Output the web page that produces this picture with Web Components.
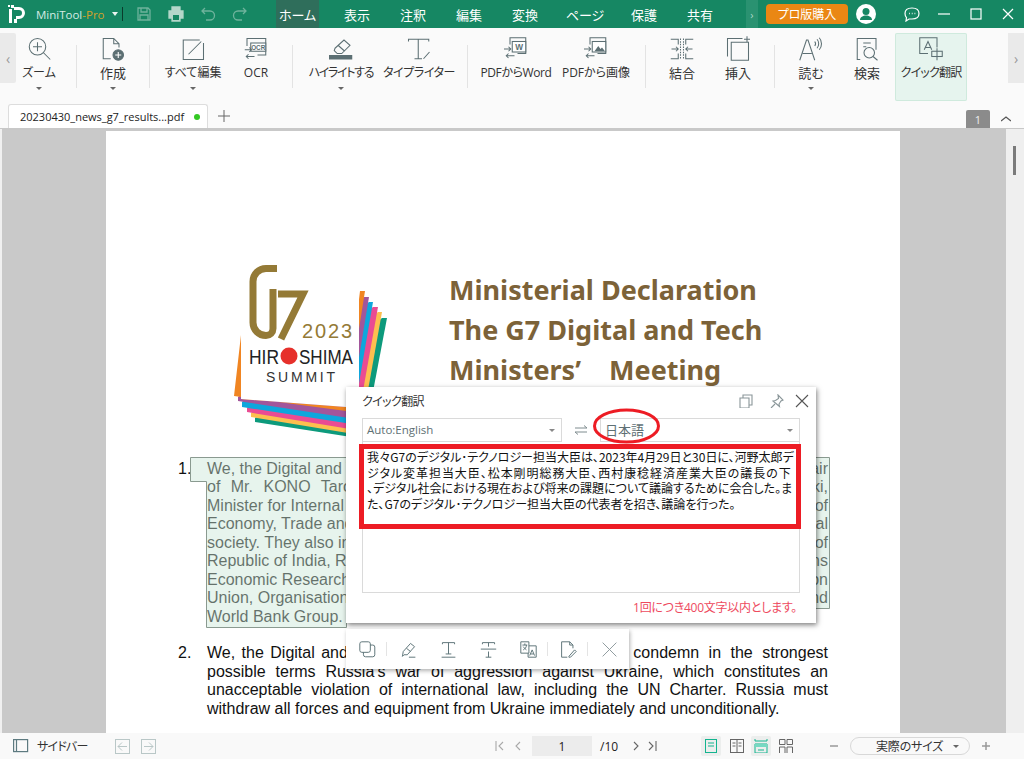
<!DOCTYPE html>
<html lang="ja">
<head>
<meta charset="utf-8">
<title>MiniTool PDF</title>
<style>
  html, body { margin: 0; height: 100%; overflow: hidden; }
  body { font-family: "Noto Sans CJK JP", "Liberation Sans", sans-serif; }
</style>
</head>
<body>
<pdf-app></pdf-app>

<script>
const FONT = `"Open Sans", "Noto Sans CJK JP", sans-serif`;

// line icons for the ribbon, all on a 32x32 box
const RIBBON_ICONS = {
  zoom: `<circle cx="14" cy="13" r="11"/><path d="M14 7v12M8 13h12M22 21l9 9"/>`,
  create: `<path d="M13 29H3V2h14l7 7v5M17 2v7h7"/><circle cx="23" cy="24" r="7" fill="#5c6f73"/><path d="M19 24h8M23 20v8" stroke="#fff"/>`,
  edit: `<path d="M30 8v22H3V4h22M10 23 27 6"/>`,
  ocr: `<path d="M4 12V2h25v22H18"/><rect x="9" y="8" width="20" height="11" fill="#fff"/><text x="19" y="17" font-size="8.500" font-family="Liberation Sans" font-weight="700" text-anchor="middle" stroke="none" fill="#5c6f73">OCR</text><path d="M1 17h9M7 14l3 3-3 3M14 26H3M6 23l-3 3 3 3"/>`,
  highlight: `<path d="M8 15 20 4l8 7-11 11h-6l-4-4zM12 11l9 8"/><rect x="0" y="24" width="31" height="6" fill="#5c6f73" stroke="none"/>`,
  type: `<path d="M2 6V3h27v3M15 3v26M10 29h10M22 29l8-9"/>`,
  toword: `<path d="M8 10V1h21v21H18"/><rect x="11" y="6" width="18" height="14" fill="#fff" stroke="#5c6f73"/><text x="20" y="17.500" font-size="11" font-family="Liberation Sans" font-weight="700" text-anchor="middle" stroke="none" fill="#5c6f73">W</text><path d="M0 16h9M6 13l3 3-3 3M14 25H3M6 22l-3 3 3 3"/>`,
  toimage: `<path d="M8 10V1h21v21H18"/><rect x="11" y="6" width="18" height="14" fill="#fff" stroke="#5c6f73"/><path d="m14 19 5-7 3 4 2-2 4 5z" fill="#5c6f73" stroke="none"/><path d="M0 16h9M6 13l3 3-3 3M14 25H3M6 22l-3 3 3 3"/>`,
  merge: `<path d="M1 3h10v7M11 22v7H1M31 3H21v7M21 22v7h10"/><path d="M14 2v28M18 2v28" stroke-dasharray="2 1.500"/><path d="M2 16h9M8 13l3 3-3 3M30 16h-9M24 13l-3 3 3 3"/>`,
  insert: `<path d="M7 7v24h23V7zM2 26V2h20M24 3h8M28 -1v8"/>`,
  read: `<path d="m1 31 9-27h2l9 27M5 22h12M24 3c3 3 3 9 0 12M27 1c4 4 4 12 0 16M21 6c1.500 2 1.500 4 0 6"/>`,
  search: `<path d="M7 30H3V2h25v15M11 8h10M11 13h4"/><circle cx="19" cy="21" r="7"/><path d="m24 26 6 5"/>`,
  translate: `<path d="M24 14V1H1v21h11M7 17l5-11 5 11M8.500 14h7"/><rect x="17" y="19" width="14" height="7"/><path d="M24 15v16"/>`
};

// small grey outline icons used by the selection bar
const SMALL_ICONS = {
  copy: `<rect x="1" y="1" width="13" height="13" rx="2.500"/><path d="M14 5h3a2.500 2.500 0 0 1 2.500 2.500v9.500a2.500 2.500 0 0 1-2.500 2.500H8a2.500 2.500 0 0 1-2.500-2.500V14"/>`,
  marker: `<path d="m4 13 9-10 5 4-9 10H5l-2 2zM8 9l5 4M11 20h8"/>`,
  under: `<path d="M3 4V2h15v2M10.500 2v14M7 16h7M2 20h17"/>`,
  strike: `<path d="M3 4V2h15v2M10.500 2v5M10.500 13v7M7 20h7M1 10h19"/>`,
  trans: `<path d="M1 1h10v14H1zM11 6h9v14H10v-5"/><path d="M3 5h6M6 3v2M8 5c0 3-2 5-4 6M4 7c1 2 3 3 4 4M12 18l3-7 3 7M13 16h4"/>`,
  note: `<path d="M9 20H2V1h10l4 4v4M12 1v4h4M11 19l7-8 2 2-7 7h-2z"/>`,
  close: `<path d="M2 2l17 17M19 2 2 19"/>`
};

class RibbonTool extends HTMLElement {
  constructor() {
    super();
    this.shadowDOM = this.attachShadow({mode: "open"});
  }

  connectedCallback() {
    const icon = RIBBON_ICONS[this.getAttribute("icon")];
    const caret = this.hasAttribute("caret") ? `<i></i>` : ``;
    this.shadowDOM.innerHTML = `
      <style>
        :host {
          display: flex;
          flex-direction: column;
          align-items: center;
          height: 68px;
          box-sizing: border-box;
          padding-top: 4px;
          font-size: 13px;
          color: #333;
          position: relative;
          flex: none;
        }
        :host([active]) {
          background: #e6f4ee;
          box-shadow: inset 0 0 0 1px #cfeadd;
          border-radius: 2px;
        }
        svg {
          width: 24px;
          height: 24px;
          fill: none;
          stroke: #5c6f73;
          stroke-width: 1.400;
          overflow: visible;
        }
        span {
          margin-top: 3px;
          line-height: 18px;
          white-space: nowrap;
          font-feature-settings: "palt";
        }
        i {
          position: absolute;
          top: 54px;
          left: 50%;
          margin-left: -3px;
          border: 3px solid transparent;
          border-top: 3px solid #666;
          border-bottom: 0;
        }
      </style>
      <svg viewBox="0 0 32 32">${icon}</svg>
      <span><slot></slot></span>
      ${caret}`;
  }
}
customElements.define("ribbon-tool", RibbonTool);

class RibbonSep extends HTMLElement {
  constructor() {
    super();
    this.attachShadow({mode: "open"}).innerHTML = `
      <style>
        :host { display: block; flex: none; width: 1px; height: 43px; background: #e3e3e3; margin-top: 12px; }
      </style>`;
  }
}
customElements.define("ribbon-sep", RibbonSep);

class TitleBar extends HTMLElement {
  constructor() {
    super();
    this.shadowDOM = this.attachShadow({mode: "open"});
    const tabs = [["表示", 56], ["注釈", 56], ["編集", 56], ["変換", 56], ["ページ", 64], ["保護", 54], ["共有", 58]];
    this.shadowDOM.innerHTML = `
      <style>
        :host {
          display: flex;
          align-items: center;
          height: 28px;
          background: #168763;
          color: #fff;
          font-size: 13px;
          font-family: ${FONT};
          font-feature-settings: "palt";
        }
        svg { flex: none; }
        .logo { width: 19px; height: 19px; margin-left: 8px; }
        .name { margin-left: 9px; font-size: 11.500px; color: #d5ebe3; width: 67px; white-space: nowrap; flex: none; }
        .name b { color: #d2a22a; font-weight: 400; }
        .down { margin-left: 9px; border: 3px solid transparent; border-top: 4px solid #eaf5f1; border-bottom: 0; }
        .bar { width: 1px; height: 14px; background: #0a3b2c; margin-left: 4px; }
        .quick { display: flex; align-items: center; gap: 16px; margin: 0 28px 0 13px; }
        .quick svg { width: 16px; height: 16px; fill: none; stroke: #6fb39c; stroke-width: 1.300; }
        .quick svg.print { stroke: #b4d7ca; fill: #b4d7ca; }
        .home { display: flex; align-items: center; justify-content: center; width: 43px; height: 28px; background: #2f6e5b; margin-right: 10px; flex: none; }
        .tabs { display: flex; height: 28px; }
        .tabs span { display: flex; align-items: center; justify-content: center; flex: none; }
        .more { width: 12px; height: 28px; margin-left: 17px; background: #2a9271; color: #a9d6c7; display: flex; align-items: center; justify-content: center; font-size: 11px; flex: none; }
        .buy { margin-left: 8px; width: 82px; height: 20px; background: #ea8714; border-radius: 4px; display: flex; align-items: center; justify-content: center; flex: none; font-size: 12px; }
        .user { width: 20px; height: 20px; margin-left: 8px; }
        .win { display: flex; align-items: center; gap: 16px; margin-left: 28px; }
        .win svg { width: 16px; height: 16px; fill: none; stroke: #fff; stroke-width: 1.200; }
      </style>
      <svg class="logo" viewBox="0 0 19 19">
        <path d="M0 0h2v2H0zM3 0h3v3H3zM1 4h3v14H1z" fill="#fff"/>
        <path d="M6 2h5a6 6 0 0 1 0 12H8v-3h3a3 3 0 0 0 0-6H6z" fill="#fff"/>
        <path d="M6 14h3v4H6z" fill="#fff"/>
      </svg>
      <span class="name">MiniTool<b>-Pro</b></span>
      <span class="down"></span>
      <span class="bar"></span>
      <div class="quick">
        <svg viewBox="0 0 16 16"><path d="M2 2h10l2 2v10H2zM5 2v4h6V2M4 14V9h8v5"/></svg>
        <svg class="print" viewBox="0 0 16 16"><path d="M4 1h8v3H4zM1 5h14v7h-3v3H4v-3H1z"/><path d="M5 9h6v5H5z" fill="#168763" stroke="none"/></svg>
        <svg viewBox="0 0 16 16"><path d="M5 2 2 5l3 3M2 5h8a4 4 0 0 1 0 9H6"/></svg>
        <svg viewBox="0 0 16 16"><path d="m11 2 3 3-3 3M14 5H6a4 4 0 0 0 0 9h4"/></svg>
      </div>
      <div class="home">ホーム</div>
      <div class="tabs">${tabs.map(t => `<span style="width:${t[1]}px">${t[0]}</span>`).join("")}</div>
      <div class="more">›</div>
      <div class="buy">プロ版購入</div>
      <svg class="user" viewBox="0 0 20 20">
        <circle cx="10" cy="10" r="10" fill="#fff"/>
        <circle cx="10" cy="7.500" r="3.500" fill="#168763"/>
        <path d="M4 16c0-3 3-4.500 6-4.500s6 1.500 6 4.500z" fill="#168763"/>
      </svg>
      <div class="win">
        <svg viewBox="0 0 16 16"><path d="M8 2c4 0 7 2 7 5.500S12 13 8 13H5l-3 2 .5-3.500C1.500 10.500 1 9 1 7.500 1 4 4 2 8 2z"/><path d="M5 7.500h.8M7.800 7.500h.8M10.500 7.500h.8" stroke-width="1.600"/></svg>
        <svg viewBox="0 0 16 16"><path d="M2 8h12"/></svg>
        <svg viewBox="0 0 16 16"><rect x="3" y="3" width="10" height="10"/></svg>
        <svg viewBox="0 0 16 16"><path d="m3 3 10 10M13 3 3 13"/></svg>
      </div>`;
  }
}
customElements.define("title-bar", TitleBar);

class ToolRibbon extends HTMLElement {
  constructor() {
    super();
    this.attachShadow({mode: "open"}).innerHTML = `
      <style>
        :host {
          display: flex;
          height: 73px;
          box-sizing: border-box;
          padding-top: 5px;
          background: #fafafa;
          font-family: ${FONT};
          font-size: 13px;
        }
        .nudge {
          flex: none;
          width: 16px;
          height: 50px;
          background: #eaeaea;
          color: #999;
          display: flex;
          align-items: center;
          justify-content: center;
          font-size: 14px;
          border-radius: 0 2px 2px 0;
        }
        .nudge.r { border-radius: 0; }
        .tools { display: flex; flex: 1; align-items: flex-start; }
      </style>
      <div class="nudge">‹</div>
      <div class="tools"><slot></slot></div>
      <div class="nudge r">›</div>`;
  }
}
customElements.define("tool-ribbon", ToolRibbon);

class TabStrip extends HTMLElement {
  constructor() {
    super();
    this.attachShadow({mode: "open"}).innerHTML = `
      <style>
        :host {
          display: flex;
          align-items: flex-end;
          height: 29px;
          box-sizing: border-box;
          background: #fafafa;
          font-family: ${FONT};
          font-size: 11px;
          color: #222;
          padding-left: 8px;
          border-bottom: 2px solid #c8c8c8;
        }
        .tab {
          width: 200px;
          height: 24px;
          box-sizing: border-box;
          background: #fff;
          border: 1px solid #ddd;
          border-bottom: 0;
          border-radius: 3px 3px 0 0;
          display: flex;
          align-items: center;
          padding-left: 11px;
          gap: 10px;
        }
        .dot { width: 6px; height: 6px; border-radius: 50%; background: #34c924; }
        .plus { width: 12px; height: 12px; margin: 0 0 6px 10px; fill: none; stroke: #666; }
        .page {
          margin-left: auto;
          width: 24px;
          height: 18px;
          background: #8b8b8b;
          color: #eee;
          display: flex;
          align-items: center;
          justify-content: center;
          font-size: 11px;
          border-radius: 2px 2px 0 0;
        }
        .up { width: 10px; height: 6px; margin: 0 13px 6px 11px; fill: none; stroke: #555; stroke-width: 1.300; }
      </style>
      <div class="tab"><span>20230430_news_g7_results...pdf</span><span class="dot"></span></div>
      <svg class="plus" viewBox="0 0 12 12"><path d="M6 0v12M0 6h12"/></svg>
      <span class="page">1</span>
      <svg class="up" viewBox="0 0 10 6"><path d="m0 5 5-4 5 4"/></svg>`;
  }
}
customElements.define("tab-strip", TabStrip);

// viewBox uses the page's pixel coordinates, which made the stripes easier to read off
class G7Logo extends HTMLElement {
  constructor() {
    super();
    this.attachShadow({mode: "open"}).innerHTML = `
      <style>
        :host { display: block; width: 160px; height: 180px; flex: none; }
        svg { display: block; }
      </style>
      <svg width="160" height="180" viewBox="234 262 160 180">
        <path d="M255 419 382 319 387 319 364 440 255 423z" fill="#0d9a7c"/>
        <path d="M251 414 378 313 382 313 360 436 251 418z" fill="#fdbf4f"/>
        <path d="M247 409 373 308 378 308 356 431 247 413z" fill="#ea4c93"/>
        <path d="M242 403 369 303 373 303 352 425 242 408z" fill="#0ea7dc"/>
        <path d="M238 398 364 298 369 298 349 419 238 402z" fill="#a2569b"/>
        <path d="M234 397 241 336 241 400 346 408 360 292 365 292 346 412z" fill="#f08522"/>
        <path d="M241 400V336L249 293H359V402L346 408z" fill="#fff"/>
        <path d="M277 269.500h-11a13 13 0 0 0-13 13v41a13 13 0 0 0 13 13a7 7 0 0 0 7-7V290" fill="none" stroke="#947a36" stroke-width="7"/>
        <path d="M278 295h25l-22 45" fill="none" stroke="#947a36" stroke-width="7"/>
        <text x="302" y="339" font-family="Liberation Sans" font-size="20" textLength="50" fill="#947a36">2023</text>
        <text x="249" y="365" font-family="Liberation Sans" font-size="21" textLength="30" lengthAdjust="spacingAndGlyphs" fill="#222">HIR</text>
        <circle cx="289" cy="357" r="8.500" fill="#e6302b"/>
        <text x="299" y="365" font-family="Liberation Sans" font-size="21" textLength="54" lengthAdjust="spacingAndGlyphs" fill="#222">SHIMA</text>
        <text x="266" y="383" font-family="Liberation Sans" font-size="14" textLength="69" fill="#333">SUMMIT</text>
      </svg>`;
  }
}
customElements.define("g7-logo", G7Logo);

class DocHeading extends HTMLElement {
  constructor() {
    super();
    this.attachShadow({mode: "open"}).innerHTML = `
      <style>
        :host {
          display: block;
          font-family: "Noto Sans", "Liberation Sans", sans-serif;
          font-weight: 700;
          font-size: 27px;
          line-height: 40px;
          color: #7c6238;
          white-space: nowrap;
        }
      </style>
      <slot></slot>`;
  }
}
customElements.define("doc-heading", DocHeading);

// one printed line: justified, or a start and an end piece when something covers the middle
class DocLine extends HTMLElement {
  constructor() {
    super();
    this.attachShadow({mode: "open"}).innerHTML = `
      <style>
        :host { display: block; height: 18.500px; white-space: nowrap; }
        :host([fit]) { white-space: normal; text-align: justify; text-align-last: justify; }
        :host([split]) { display: flex; justify-content: space-between; }
      </style>
      <slot></slot>`;
  }
}
customElements.define("doc-line", DocLine);

class DocPara extends HTMLElement {
  constructor() {
    super();
    this.attachShadow({mode: "open"}).innerHTML = `
      <style>
        :host {
          display: grid;
          grid-template-columns: 29px 1fr;
          font-family: "Liberation Sans", Arial, sans-serif;
          font-size: 16px;
          line-height: 18.500px;
          color: #111;
        }
      </style>
      <div>${this.getAttribute("num")}</div>
      <div><slot></slot></div>`;
  }
}
customElements.define("doc-para", DocPara);

class PdfPage extends HTMLElement {
  constructor() {
    super();
    this.attachShadow({mode: "open"}).innerHTML = `
      <style>
        :host {
          display: block;
          flex: none;
          width: 794px;
          height: 602px;
          margin-top: 2px;
          background: #fff;
          box-sizing: border-box;
          padding: 130px 72px 0 72px;
        }
        .top { display: flex; height: 198.500px; }
        .logo { margin-left: 56px; }
        .heads { margin-left: 55px; padding-top: 9px; }
        .paras { display: flex; flex-direction: column; gap: 18px; }
      </style>
      <div class="top">
        <div class="logo"><slot name="logo"></slot></div>
        <div class="heads"><slot name="heading"></slot></div>
      </div>
      <div class="paras"><slot></slot></div>`;
  }
}
customElements.define("pdf-page", PdfPage);

class SelectBox extends HTMLElement {
  constructor() {
    super();
    this.attachShadow({mode: "open"}).innerHTML = `
      <style>
        :host {
          display: flex;
          align-items: center;
          height: 24px;
          box-sizing: border-box;
          border: 1px solid #dadada;
          padding: 0 6px 2px 4px;
          font-size: 11.500px;
          color: #5e7074;
          background: #fff;
        }
        i { margin: 2px 0 0 auto; border: 3px solid transparent; border-top: 3px solid #888; border-bottom: 0; }
      </style>
      <span><slot></slot></span><i></i>`;
  }
}
customElements.define("select-box", SelectBox);

class TranslatePopup extends HTMLElement {
  constructor() {
    super();
    this.attachShadow({mode: "open"}).innerHTML = `
      <style>
        :host {
          position: absolute;
          left: 346px;
          top: 387px;
          width: 470px;
          height: 236px;
          background: #fff;
          box-shadow: 1px 2px 5px rgba(0,0,0,.5);
          font-family: ${FONT};
          font-size: 12px;
          color: #333;
          box-sizing: border-box;
          padding: 0 16px;
          display: flex;
          flex-direction: column;
        }
        .head { display: flex; align-items: center; height: 27px; box-sizing: border-box; font-feature-settings: "palt"; letter-spacing: -.6px; }
        .head svg { width: 14px; height: 14px; fill: none; stroke: #8a9699; stroke-width: 1.100; flex: none; }
        .head .ops { margin-left: auto; display: flex; margin-right: -9px; }
        .langs { display: grid; grid-template-columns: 200px 38px 200px; margin-top: 4px; }
        .swap { display: flex; align-items: center; justify-content: center; }
        .swap svg { width: 14px; height: 10px; fill: none; stroke: #7f8c8f; }
        .result {
          height: 151px;
          box-sizing: border-box;
          border: 1px solid #dadada;
          border-top: 0;
          font-family: "Noto Sans CJK JP", sans-serif;
          font-feature-settings: "palt";
          font-size: 12px;
          line-height: 15.700px;
          color: #111;
          padding: 7px 4px 0;
          white-space: nowrap;
        }
        .limit { margin-top: 7px; text-align: right; font-size: 12px; line-height: 16px; color: #ee4a5e; padding-right: 3px; font-feature-settings: "palt"; letter-spacing: -.25px; }
        .box {
          position: absolute;
          left: 13px;
          top: 57px;
          width: 432px;
          height: 75px;
          border: 5px solid #ed1c24;
        }
        .oval {
          position: absolute;
          left: 247px;
          top: 21px;
          width: 67px;
          height: 36px;
        }
      </style>
      <div class="head">
        <span>クイック翻訳</span>
        <div class="ops">
          <svg viewBox="0 0 14 14" style="margin-right:17px"><path d="M1 4h9v10H1zM4 4V1h9v10h-3"/></svg>
          <svg viewBox="0 0 14 14" style="margin-right:11px"><path d="m8 1 5 5-2 1-2 3 .5 2.500L3 7l2.500-.5 3-2zM5 10l-4 4"/></svg>
          <svg viewBox="0 0 14 14" style="stroke:#555"><path d="m1 1 12 12M13 1 1 13"/></svg>
        </div>
      </div>
      <div class="langs">
        <select-box>Auto:English</select-box>
        <div class="swap"><svg viewBox="0 0 14 10"><path d="M1 3h12L10 .5M13 7H1l3 2.500"/></svg></div>
        <select-box><span style="font-size:13px">日本語</span></select-box>
      </div>
      <div class="result"><slot></slot></div>
      <div class="limit">1回につき400文字以内とします。</div>
      <div class="box"></div>
      <svg class="oval" viewBox="0 0 67 36"><ellipse cx="33.500" cy="18" rx="32" ry="16" fill="none" stroke="#ed1c24" stroke-width="3"/></svg>`;
  }
}
customElements.define("translate-popup", TranslatePopup);

class SelectionBar extends HTMLElement {
  constructor() {
    super();
    const item = (k, gap, extra) => `<svg viewBox="0 0 21 21" style="margin-right:${gap}px;${extra || ""}">${SMALL_ICONS[k]}</svg>`;
    this.attachShadow({mode: "open"}).innerHTML = `
      <style>
        :host {
          position: absolute;
          left: 346px;
          top: 629px;
          width: 283px;
          height: 40px;
          background: #fff;
          box-shadow: 1px 2px 4px rgba(0,0,0,.3);
          display: flex;
          align-items: center;
          padding-left: 13px;
          box-sizing: border-box;
        }
        svg { width: 17px; height: 17px; fill: none; stroke: #5d7478; stroke-width: 1.200; flex: none; }
        b { width: 1px; height: 14px; background: #e4e4e4; margin-right: 12px; flex: none; }
      </style>
      ${item("copy", 10)}<b style="margin-right:13px"></b>${item("marker", 23)}${item("under", 23)}${item("strike", 23)}${item("trans", 10)}<b></b>${item("note", 10)}<b style="margin-right:13px"></b>${item("close", 0, "stroke:#8d9a9d")}`;
  }
}
customElements.define("selection-bar", SelectionBar);

class TextHighlight extends HTMLElement {
  constructor() {
    super();
    this.attachShadow({mode: "open"}).innerHTML = `
      <style>
        :host {
          position: absolute;
          left: 190px;
          top: 457px;
          width: 640px;
          height: 171px;
        }
        svg { display: block; }
      </style>
      <svg width="640" height="171" viewBox="0 0 640 171">
        <path d="M.5 .5H639.500V151.500H156.500V170.500H16.500V24.500H.5z" fill="#c9e6d6" fill-opacity=".45" stroke="#8a9a90"/>
      </svg>`;
  }
}
customElements.define("text-highlight", TextHighlight);

class StatusBar extends HTMLElement {
  constructor() {
    super();
    this.attachShadow({mode: "open"}).innerHTML = `
      <style>
        :host {
          display: flex;
          align-items: center;
          height: 26px;
          background: #f9f9f9;
          font-family: ${FONT};
          font-size: 12px;
          color: #333;
          font-feature-settings: "palt";
        }
        svg { flex: none; fill: none; }
        .sq { flex: none; width: 15px; height: 15px; border: 1px solid #b9c7c7; box-sizing: border-box; display: flex; align-items: center; justify-content: center; }
        .g { stroke: #a9a9a9; stroke-width: 1.100; width: 9px; height: 10px; }
        .num { flex: none; width: 60px; height: 20px; background: #ececec; display: flex; align-items: center; justify-content: center; color: #222; }
        .view { flex: none; width: 20px; height: 20px; display: flex; align-items: center; justify-content: center; border-radius: 2px; }
        .view.on { background: #eceeed; }
        .view svg { width: 14px; height: 14px; stroke: #666; }
        .view.on svg { stroke: #13b48f; }
        .zoom { flex: none; width: 120px; height: 18px; box-sizing: border-box; border: 1px solid #d8d8d8; border-radius: 9px; display: flex; align-items: center; padding-left: 25px; font-size: 12px; letter-spacing: -.2px; }
        .zoom i { margin-left: auto; margin-right: 10px; border: 3px solid transparent; border-top: 3px solid #666; border-bottom: 0; }
      </style>
      <svg width="16" height="16" viewBox="0 0 16 16" style="margin-left:13px;stroke:#5d7a80;stroke-width:1.200"><rect x=".6" y="1.600" width="14" height="12"/><path d="M3.500 2v11"/></svg>
      <span style="margin-left:8px;width:50px;flex:none;white-space:nowrap;letter-spacing:-.8px">サイドバー</span>
      <span class="sq" style="margin-left:28px"><svg width="11" height="11" viewBox="0 0 11 11" style="stroke:#b9c7c7"><path d="M10 5.500H1M5 1.500l-4 4 4 4"/></svg></span>
      <span class="sq" style="margin-left:11px"><svg width="11" height="11" viewBox="0 0 11 11" style="stroke:#b9c7c7"><path d="M1 5.500h9M6 1.500l4 4-4 4"/></svg></span>
      <svg class="g" viewBox="0 0 9 10" style="margin-left:339px"><path d="M1 0v10M8 1 4 5l4 4"/></svg>
      <svg class="g" viewBox="0 0 9 10" style="margin-left:9px"><path d="M7 1 3 5l4 4"/></svg>
      <span class="num" style="margin-left:10px">1</span>
      <span style="margin-left:8px;width:18px;flex:none;color:#222">/10</span>
      <svg class="g" viewBox="0 0 9 10" style="margin-left:14px;stroke:#666"><path d="m2 1 4 4-4 4"/></svg>
      <svg class="g" viewBox="0 0 9 10" style="margin-left:7px;stroke:#666"><path d="m1 1 4 4-4 4M8 0v10"/></svg>
      <span class="view on" style="margin-left:44px"><svg viewBox="0 0 14 14"><rect x="1.500" y=".5" width="11" height="13"/><path d="M4 4h6M4 7h6"/></svg></span>
      <span class="view" style="margin-left:6px"><svg viewBox="0 0 14 14"><rect x=".5" y=".5" width="13" height="13"/><path d="M7 .5v13M2.500 4h3M2.500 7h3M8.500 4h3M8.500 7h3"/></svg></span>
      <span class="view on" style="margin-left:4px"><svg viewBox="0 0 14 14"><path d="M1 0v2h12V0M1 14V5h12v9z"/><path d="M1 5h12v3H1z" fill="#76d9c2" stroke="none"/><path d="M4 11h6"/></svg></span>
      <span class="view" style="margin-left:5px"><svg viewBox="0 0 14 14"><path d="M.5 .5h5.500v5H.5zM8 .5h5.500v5H8zM.5 14V8H6v6M8 14V8h5.500v6"/></svg></span>
      <svg width="8" height="2" viewBox="0 0 8 2" style="margin-left:34px;stroke:#999;stroke-width:1.500"><path d="M0 1h8"/></svg>
      <span class="zoom" style="margin-left:12px"><span>実際のサイズ</span><i></i></span>
      <svg width="8" height="8" viewBox="0 0 8 8" style="margin-left:12px;stroke:#999;stroke-width:1.500"><path d="M0 4h8M4 0v8"/></svg>`;
  }
}
customElements.define("status-bar", StatusBar);

class PdfApp extends HTMLElement {
  constructor() {
    super();
    this.attachShadow({mode: "open"}).innerHTML = `
      <style>
        :host { display: block; width: 1024px; height: 759px; position: relative; overflow: hidden; background: #c9c9c9; }
        .work { display: flex; height: 604px; margin-top: -1px; }
        .canvas { flex: 1; display: flex; padding-left: 104px; border-left: 2px solid #f0f0f0; }
        .rail { flex: none; width: 18px; background: #efefef; position: relative; }
        .rail::after { content: ""; position: absolute; left: 7px; top: 17px; width: 3px; height: 29px; background: #7a7a7a; }
      </style>
      <title-bar></title-bar>
      <tool-ribbon>
        <ribbon-tool icon="zoom" caret style="width:46px;font-size:12px">ズーム</ribbon-tool>
        <ribbon-sep style="margin-left:14px"></ribbon-sep>
        <ribbon-tool icon="create" caret style="width:72px">作成</ribbon-tool>
        <ribbon-sep></ribbon-sep>
        <ribbon-tool icon="edit" caret style="width:70px;margin-left:8px;font-size:12px">すべて編集</ribbon-tool>
        <ribbon-tool icon="ocr" style="width:44px;margin-left:6px;font-size:12px">OCR</ribbon-tool>
        <ribbon-sep style="margin-left:14px"></ribbon-sep>
        <ribbon-tool icon="highlight" caret style="width:72px;margin-left:12px;font-size:12px;letter-spacing:-1.300px">ハイライトする</ribbon-tool>
        <ribbon-tool icon="type" style="width:72px;margin-left:6px;font-size:12px;letter-spacing:-.4px">タイプライター</ribbon-tool>
        <ribbon-sep style="margin-left:12px"></ribbon-sep>
        <ribbon-tool icon="toword" style="width:76px;margin-left:10px;font-size:12px;letter-spacing:-.4px">PDFからWord</ribbon-tool>
        <ribbon-tool icon="toimage" style="width:76px;margin-left:4px;font-size:12px">PDFから画像</ribbon-tool>
        <ribbon-sep style="margin-left:11px"></ribbon-sep>
        <ribbon-tool icon="merge" style="width:56px;margin-left:8px">結合</ribbon-tool>
        <ribbon-tool icon="insert" style="width:56px">挿入</ribbon-tool>
        <ribbon-sep style="margin-left:8px"></ribbon-sep>
        <ribbon-tool icon="read" caret style="width:48px;margin-left:12px">読む</ribbon-tool>
        <ribbon-tool icon="search" style="width:48px;margin-left:8px">検索</ribbon-tool>
        <ribbon-tool icon="translate" active style="width:72px;margin-left:4px;font-size:12px;letter-spacing:-.8px">クイック翻訳</ribbon-tool>
      </tool-ribbon>
      <tab-strip></tab-strip>
      <div class="work">
        <div class="canvas">
          <pdf-page>
            <g7-logo slot="logo"></g7-logo>
            <div slot="heading">
              <doc-heading>Ministerial Declaration</doc-heading>
              <doc-heading>The G7 Digital and Tech</doc-heading>
              <doc-heading>Ministers’&nbsp;<span style="margin-left:21px">Meeting</span></doc-heading>
            </div>
            <doc-para num="1.">
              <doc-line split><span>We, the Digital and T</span><span>air</span></doc-line>
              <doc-line split><span style="word-spacing:6px">of Mr. KONO Taro</span><span>ki,</span></doc-line>
              <doc-line split><span>Minister for Internal</span><span>of</span></doc-line>
              <doc-line split><span>Economy, Trade and</span><span>al</span></doc-line>
              <doc-line split><span>society. They also in</span><span>of</span></doc-line>
              <doc-line split><span>Republic of India, Re</span><span>ns</span></doc-line>
              <doc-line split><span>Economic Research</span><span>on</span></doc-line>
              <doc-line split><span>Union, Organisation</span><span>nd</span></doc-line>
              <doc-line>World Bank Group.</doc-line>
            </doc-para>
            <doc-para num="2.">
              <doc-line split><span style="word-spacing:2px">We, the Digital and</span><span style="word-spacing:5px">n condemn in the strongest</span></doc-line>
              <doc-line fit>possible terms Russia’s war of aggression against Ukraine, which constitutes an</doc-line>
              <doc-line fit>unacceptable violation of international law, including the UN Charter. Russia must</doc-line>
              <doc-line>withdraw all forces and equipment from Ukraine immediately and unconditionally.</doc-line>
            </doc-para>
          </pdf-page>
        </div>
        <div class="rail"></div>
      </div>
      <status-bar></status-bar>
      <text-highlight></text-highlight>
      <translate-popup>我々G7のデジタル･テクノロジー担当大臣は、2023年4月29日と30日に、河野太郎デ<br><span style="letter-spacing:.95px">ジタル変革担当大臣、松本剛明総務大臣、西村康稔経済産業大臣の議長の下</span><br>、デジタル社会における現在および将来の課題について議論するために会合した。ま<br>た、G7のデジタル･テクノロジー担当大臣の代表者を招き、議論を行った。</translate-popup>
      <selection-bar></selection-bar>`;
  }
}
customElements.define("pdf-app", PdfApp);
</script>
</body>
</html>
